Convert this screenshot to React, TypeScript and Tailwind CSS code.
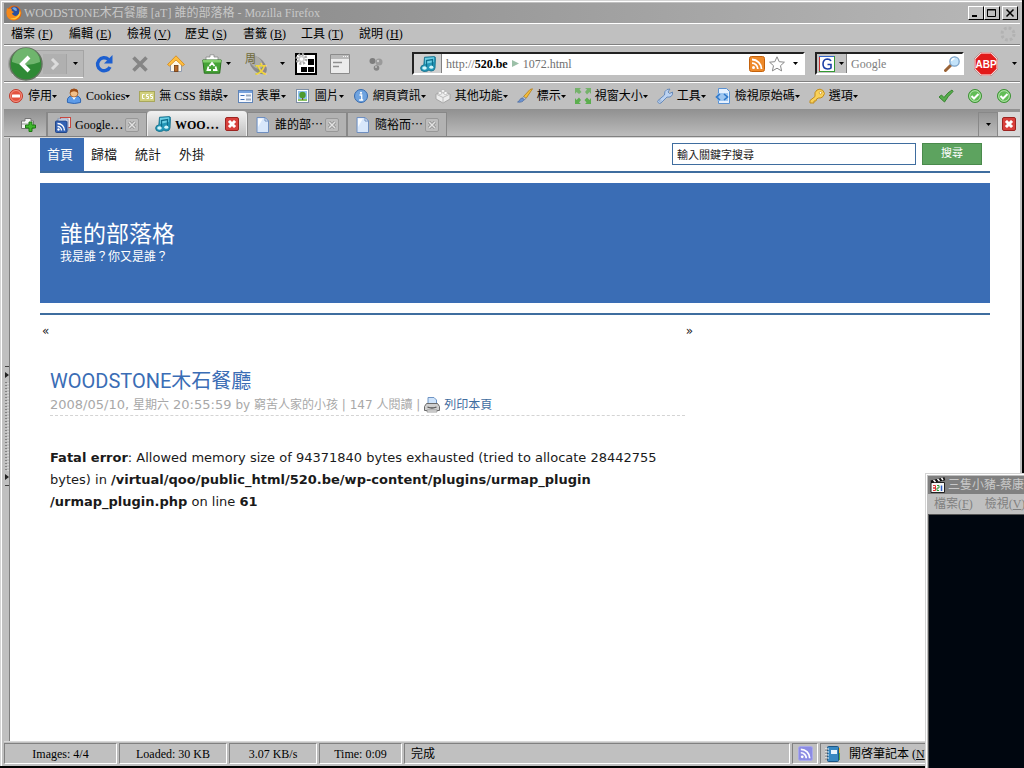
import React, { useState } from "react";

const UI_FONT = "font-['Liberation_Serif','Noto_Sans_CJK_TC',serif]";
const PAGE_FONT = "font-['DejaVu_Sans','Noto_Sans_CJK_TC',sans-serif]";

interface IconProps {
  className?: string;
}

const FirefoxIcon: React.FC<IconProps> = ({ className = "size-4" }) => (
  <svg className={className} viewBox="0 0 16 16">
    <circle cx="8" cy="8" r="7.5" fill="#e66a10" />
    <circle cx="8.6" cy="6.6" r="5" fill="#2a4f9e" />
    <path d="M6 3q3-2 5 1-1 1 0 2-2 0-3-1z" fill="#79a8dd" />
    <path
      d="M1 3q1 1 2 1 2-1 3 0-1 1 0 2l2 1q-1 1-2 1 0 2 3 3 3 0 5-4 0 6-5 8-6 1-8-4-1-4 0-8z"
      fill="#f58a1c"
    />
    <path d="M14 5q2 6-4 9-4 1-6-1 8 2 10-8z" fill="#ffc93a" />
  </svg>
);

const MusicIcon: React.FC<IconProps> = ({ className = "size-4" }) => (
  <svg className={className} viewBox="0 0 16 16">
    <path
      d="M4.500 1.200 14 .6q1.700 0 1.500 1.800L15 12q-.5 3-3.500 3-2 0-2.500-1Q7.500 15.600 4 15.500.5 15 .6 12 1 9 3.800 9z"
      fill="#2497b8"
      stroke="#0f6985"
      strokeWidth=".8"
    />
    <path d="M5 2 14 1.300 13.800 6 5 8z" fill="#6fd0e6" />
    <path d="M6.500 11.500V4.500l6-1V10" fill="none" stroke="#0e6e8c" strokeWidth="1.300" />
    <ellipse cx="4.500" cy="12" rx="2.300" ry="1.800" fill="#d2f5fb" />
    <ellipse cx="11.300" cy="11.200" rx="2" ry="1.600" fill="#d2f5fb" />
  </svg>
);

const RssIcon: React.FC<IconProps & { color?: string; edge?: string }> = ({
  className = "size-4",
  color = "#ee8a2a",
  edge = "#c4620c",
}) => (
  <svg className={className} viewBox="0 0 16 16">
    <rect x=".5" y=".5" width="15" height="15" rx="2" fill={color} stroke={edge} />
    <circle cx="4.500" cy="11.500" r="1.500" fill="#fff" />
    <path
      d="M3 7.200a5.800 5.800 0 0 1 5.800 5.800M3 3.500A9.500 9.500 0 0 1 12.500 13"
      fill="none"
      stroke="#fff"
      strokeWidth="1.800"
    />
  </svg>
);

const FeedsIcon = () => (
  <svg className="size-4" viewBox="0 0 16 16">
    <rect x="5.500" y=".5" width="10" height="10" fill="#f7e3e0" stroke="#c9473e" />
    <rect x="3" y="2" width="10" height="11" fill="#fff" stroke="#7b8fb8" />
    <rect x=".5" y="4" width="11.500" height="11.500" rx="1" fill="#3462b4" stroke="#234788" />
    <circle cx="3.500" cy="12.500" r="1.200" fill="#fff" />
    <path
      d="M2.500 9.500a4 4 0 0 1 4 4M2.500 6.500a7 7 0 0 1 7 7"
      fill="none"
      stroke="#fff"
      strokeWidth="1.400"
    />
  </svg>
);

const DocIcon = () => (
  <svg className="size-4" viewBox="0 0 16 16">
    <path d="M2 .5h8l3.500 3.500v11.500H2z" fill="#d8e7fb" stroke="#6f8fc0" />
    <path d="M3 1.500h5L3 10z" fill="#f8fbff" />
    <path d="M10 .5V4h3.500z" fill="#fff" stroke="#6f8fc0" />
  </svg>
);

const NewTabIcon = () => (
  <svg className="h-4 w-4" viewBox="0 0 16 16">
    <path d="M1.500 12.500V5H5V2.500h6V5h2.500v7.500z" fill="#f4f4f4" stroke="#777" />
    <path d="M2 8h9" stroke="#9a9a9a" />
    <path d="M9 6h3v3h3.500v3H12v3.500H9V12H5.500V9H9z" fill="#3fb62d" stroke="#1d7812" />
  </svg>
);

const StopSignIcon = () => (
  <svg className="size-4" viewBox="0 0 16 16">
    <circle cx="8" cy="8" r="6.500" fill="#e4523f" stroke="#c03a2c" />
    <circle cx="8" cy="8" r="5.500" fill="none" stroke="#f4a596" strokeWidth=".8" />
    <rect x="4" y="6.500" width="8" height="3" rx=".5" fill="#fff" />
  </svg>
);

const PersonIcon = () => (
  <svg className="size-4" viewBox="0 0 16 16">
    <path d="M1.500 14.500q-1-5.500 3.500-6.500h6q4.500 1 3.500 6.500-6 2-13 0z" fill="#5d9be8" stroke="#2f66b3" />
    <path d="M5.500 8 8 12l2.500-4z" fill="#fff" />
    <circle cx="8" cy="5" r="4" fill="#f2c08a" stroke="#a35a22" strokeWidth=".8" />
    <path d="M4 5Q3.500.8 8 .8t4 4.200q-2-1.800-4-1.800T4 5z" fill="#9c4d18" />
  </svg>
);

const CssIcon = () => (
  <svg className="size-4" viewBox="0 0 16 16">
    <rect x=".5" y="3.500" width="15" height="10" fill="#d0cf7c" stroke="#a8a75c" />
    <path
      d="M5.500 6.500h-2v4h2M9.500 6.500h-2v2h2v2h-2M13.500 6.500h-2v2h2v2h-2"
      fill="none"
      stroke="#fff"
    />
  </svg>
);

const FormIcon = () => (
  <svg className="size-4" viewBox="0 0 16 16">
    <rect x="1.500" y="2.500" width="14" height="12" fill="#f4f8ff" stroke="#5f84b8" />
    <path d="M2 3h13v2H2z" fill="#77a2dd" />
    <path d="M3.500 7.500h4M3.500 11.500h4" stroke="#3f6fb5" />
    <path d="M9 7.500h5M9 11.500h5" stroke="#9aa9bf" strokeWidth="2" />
  </svg>
);

const ImageIcon = () => (
  <svg className="size-4" viewBox="0 0 16 16">
    <rect x="1.500" y="1.500" width="12" height="13" fill="#fff" stroke="#7e8fa6" />
    <rect x="3" y="3" width="9" height="10" fill="#8fc2ef" />
    <path d="M3 11h9v2H3z" fill="#8cc466" />
    <circle cx="7.500" cy="7" r="3.200" fill="#4d9a2e" />
    <path d="M7 10h1.200v2H7z" fill="#7a5426" />
  </svg>
);

const InfoIcon = () => (
  <svg className="size-4" viewBox="0 0 16 16">
    <circle cx="8" cy="8" r="6.500" fill="#6fa3df" stroke="#3569ae" />
    <circle cx="8" cy="4.800" r="1.100" fill="#fff" />
    <path d="M6.500 7h2.200v5M6.200 12h4" fill="none" stroke="#fff" strokeWidth="1.300" />
  </svg>
);

const BrickIcon = () => (
  <svg className="size-4" viewBox="0 0 16 16">
    <path d="m1 6 7-3 7 3v5l-7 4-7-4z" fill="#ededed" stroke="#999" strokeWidth=".8" />
    <path d="m1 6 7 3.500L15 6M8 9.500V15" fill="none" stroke="#bbb" />
    <ellipse cx="5" cy="5" rx="2" ry="1.400" fill="#fff" stroke="#aaa" strokeWidth=".7" />
    <ellipse cx="10.500" cy="5" rx="2" ry="1.400" fill="#fff" stroke="#aaa" strokeWidth=".7" />
    <ellipse cx="8" cy="3" rx="2" ry="1.300" fill="#fff" stroke="#aaa" strokeWidth=".7" />
  </svg>
);

const BrushIcon = () => (
  <svg className="size-4" viewBox="0 0 16 16">
    <path d="M15.500.8 13 1.500 6.500 8.500l2.500 2z" fill="#f4bd3c" stroke="#b47c14" strokeWidth=".8" />
    <path d="m6.500 8.500-1 1.500 1.800 1.800L9 10.500z" fill="#b9c7de" stroke="#6c7a92" strokeWidth=".6" />
    <path d="M5.500 10q-2 0-2.700 1.700T.5 14q4.500 1 6.800-2.200z" fill="#6b92d0" stroke="#3a5e9a" strokeWidth=".6" />
  </svg>
);

const ResizeIcon = () => (
  <svg className="size-4" viewBox="0 0 16 16" fill="#5cae4f">
    <path d="M0 0h6L4.500 1.500 6.500 4 4 6 1.500 4 0 6z" opacity=".75" />
    <path d="M16 0v6l-1.500-2L12 6.500 10 4l2-2.500L10 0z" opacity=".75" />
    <path d="M0 16v-6l1.500 2L4 9.500 6 12l-2 2.500L6 16z" />
    <path d="M16 16h-6l1.500-1.500-2-2.500L12 9.500l2.500 2.500L16 10z" />
  </svg>
);

const WrenchIcon = () => (
  <svg className="size-4" viewBox="0 0 16 16">
    <path
      d="M1 12.500 7.500 7Q7 3 10 1.500L13 1l-2 3 1.500 1.500L15.500 4q.5 3-1.500 4.500-2 1-4 .5L4 15q-1.500 1-2.700-.2T1 12.500z"
      fill="#bcd3f2"
      stroke="#5e83b6"
      strokeWidth=".9"
    />
    <circle cx="3.300" cy="13" r=".9" fill="#fff" stroke="#5e83b6" strokeWidth=".6" />
  </svg>
);

const SourceIcon = () => (
  <svg className="size-4" viewBox="0 0 16 16">
    <path d="M3.500.5h8l3 3v12h-11z" fill="#e6f1ff" stroke="#5b92d2" />
    <path d="M2 5h11v8H2z" fill="#8cbcec" opacity=".8" />
    <path d="m5 6-3.500 3L5 12M9 6l3.500 3L9 12" fill="none" stroke="#2f78c9" strokeWidth="1.600" />
  </svg>
);

const KeyIcon = () => (
  <svg className="size-4" viewBox="0 0 16 16">
    <path
      d="M6 8.500Q5 4 8 2t6 .5q3 3 0 6-2 2-4.500 1.500L7.500 11 7 13H5v2H1v-2.500z"
      fill="#f8d15a"
      stroke="#c18c1c"
    />
    <circle cx="11.500" cy="4.800" r="1.300" fill="#fff" stroke="#c18c1c" strokeWidth=".7" />
  </svg>
);

const TickIcon = () => (
  <svg className="size-4" viewBox="0 0 16 16">
    <path d="m1 9 2.500-2L6 9.500Q10 4 14 2l1 1.500Q10 8 6.500 14z" fill="#57ad4d" stroke="#37842f" />
  </svg>
);

const TickCircleIcon = () => (
  <svg className="size-4" viewBox="0 0 16 16">
    <circle cx="8" cy="8" r="6.500" fill="#62bd56" stroke="#3c9133" />
    <circle cx="8" cy="8" r="5.300" fill="none" stroke="#b5e3ae" />
    <path d="m4.500 8 2.500 2.500L11.500 6" fill="none" stroke="#fff" strokeWidth="2" />
  </svg>
);

const ReloadIcon = () => (
  <svg className="h-5 w-[18px]" viewBox="0 0 18 20">
    <path d="M13.500 5.500A6.500 6.500 0 1 0 15 13" fill="none" stroke="#1c5fd0" strokeWidth="3.400" />
    <path d="M17.500 1v8.500H9z" fill="#1c5fd0" />
  </svg>
);

const CancelIcon = () => (
  <svg className="size-4" viewBox="0 0 16 16">
    <path d="m1.500 1.500 13 13m0-13-13 13" stroke="#858585" strokeWidth="3.600" />
  </svg>
);

const HomeIcon = () => (
  <svg className="size-[18px]" viewBox="0 0 18 18">
    <path d="M3.500 8v8.500h11V8L9 3z" fill="#fdf6e6" stroke="#8f9bb0" />
    <rect x="7.500" y="10.500" width="3.500" height="6" fill="#b86a28" stroke="#6e3a10" strokeWidth=".8" />
    <path d="M9 .8.500 9.500l2 1.500L9 5l6.500 6 2-1.500z" fill="#ffbf3f" stroke="#d28518" strokeWidth=".8" />
  </svg>
);

const RecycleIcon = () => (
  <svg className="size-5" viewBox="0 0 20 20">
    <path d="M4 7V3h4V.8h4V3h4v4z" fill="#fff" stroke="#888" strokeWidth=".8" />
    <path d="M.8 6h18.400l-1.500 13.200H2.300z" fill="#45a336" stroke="#2b7120" />
    <path d="M.8 6h18.400l-.3 2.500H1.100z" fill="#83cf6d" />
    <path d="m7.500 12 2.500-3 2.500 3M13.500 12.500l1 3.500H11M6.500 12.500l-1 3.500H9" fill="none" stroke="#fff" strokeWidth="1.800" />
  </svg>
);

const TranslateIcon = () => (
  <svg className="size-6" viewBox="0 0 24 24">
    <ellipse cx="14" cy="13" rx="11" ry="6.500" transform="rotate(48 14 13)" fill="#8a8a8a" />
    <ellipse cx="12" cy="10" rx="8" ry="5" transform="rotate(48 12 10)" fill="#adadaa" />
    <g fontFamily="Noto Sans CJK TC, sans-serif">
      <text x="1" y="11" fontSize="11" fill="#6f6a3a">
        周
      </text>
      <text x="11" y="22" fontSize="12" fontWeight="bold" fill="#f0d43c">
        文
      </text>
    </g>
  </svg>
);

const GridIcon = () => (
  <svg className="size-[22px]" viewBox="0 0 22 22">
    <path d="M0 0h22v22H0z" fill="#000" />
    <path d="M2 2h18v18H2z" fill="#fff" />
    <path d="M13 6h6v6h-6zM6 14h6v5H6zM13 14h6v5h-6z" fill="#000" />
    <circle cx="6.500" cy="6" r="4.500" fill="none" stroke="#aaa" strokeWidth="3" strokeDasharray="2 1.500" />
    <circle cx="6.500" cy="6" r="2.500" fill="none" stroke="#ccc" strokeWidth="1.500" />
  </svg>
);

const PanelIcon = () => (
  <svg className="size-5" viewBox="0 0 20 20">
    <path d="M.5.5h19v19H.5z" fill="#ececec" stroke="#8b8b8b" />
    <path d="M1 1h18v4H1z" fill="#b9b9b9" />
    <path d="M13 2.500h5" stroke="#f5f5f5" strokeDasharray="1 1" />
    <path d="M3 8.500h9M3 12.500h6" stroke="#8f8f8f" strokeWidth="1.500" />
  </svg>
);

const DotsIcon = () => (
  <svg className="size-[14px]" viewBox="0 0 14 14">
    <circle cx="3.500" cy="4" r="3" fill="#7d7d7d" />
    <circle cx="10" cy="5" r="3.500" fill="#9a9a9a" />
    <circle cx="7.500" cy="11" r="2.800" fill="#858585" />
    <circle cx="9" cy="4" r="1.200" fill="#cacaca" />
    <circle cx="7" cy="10" r="1" fill="#c0c0c0" />
  </svg>
);

const StarIcon = () => (
  <svg className="size-4" viewBox="0 0 16 16">
    <path
      d="m8 .8 2.200 4.900 5.200.5-3.900 3.500 1.100 5.200L8 12.200l-4.600 2.700 1.100-5.200L.6 6.200l5.200-.5z"
      fill="#fff"
      stroke="#888"
    />
  </svg>
);

const SearchIcon = () => (
  <svg className="size-4" viewBox="0 0 16 16">
    <path d="m1.500 14.500 5-5" stroke="#9a6235" strokeWidth="3" strokeLinecap="round" />
    <circle cx="10.500" cy="5.500" r="4.700" fill="#c3e3fa" stroke="#7ba3c9" strokeWidth="1.300" />
    <path d="M7.500 5q.5-2.500 3-2.500" fill="none" stroke="#fff" strokeWidth="1.300" />
  </svg>
);

const AdblockIcon = () => (
  <svg className="size-6" viewBox="0 0 24 24">
    <path d="M7 .2h10L23.800 7v10L17 23.800H7L.2 17V7z" fill="#b03030" />
    <path d="M7.200 1h9.600L23 7.200v9.600L16.800 23H7.200L1 16.800V7.200z" fill="#e21a1a" stroke="#fff" />
    <text
      x="12"
      y="15.500"
      textAnchor="middle"
      fontFamily="Liberation Sans, sans-serif"
      fontWeight="bold"
      fontSize="10"
      fill="#fff"
    >
      ABP
    </text>
  </svg>
);

const ThrobberIcon = () => (
  <svg className="size-4" viewBox="0 0 16 16">
    <circle cx="8" cy="8" r="6" fill="none" stroke="#b2b2b2" strokeWidth="3" strokeDasharray="2.700 2" />
  </svg>
);

const PrinterIcon = () => (
  <svg className="size-4" viewBox="0 0 16 16">
    <path d="M4 7V.5h6L12.500 3v4z" fill="#cfe4fb" stroke="#6f94c4" />
    <path d="M2.500 6.500h11l2 3v4H.5v-4z" fill="#cfcfcf" stroke="#6b6b6b" />
    <path d="M3.500 10Q8 12 12.500 10" fill="none" stroke="#555" strokeWidth="1.300" />
    <path d="M3 13h10v2H3z" fill="#f2f2f2" stroke="#888" strokeWidth=".8" />
  </svg>
);

const NotebookIcon = () => (
  <svg className="size-4" viewBox="0 0 16 16">
    <path d="M13 2h2v5h-2z" fill="#e3b53c" />
    <path d="M13 7h2v7h-2z" fill="#58a648" />
    <rect x="2.500" y=".5" width="11" height="15" rx="1" fill="#3989c2" stroke="#1e5785" />
    <path d="M6 4h6v4H6z" fill="#e9f4fc" />
    <path d="M0 3h4M0 6h4M0 9h4M0 12h4" stroke="#f7f7f7" />
    <path d="M0 4h3M0 7h3M0 10h3M0 13h3" stroke="#555" strokeWidth=".6" />
  </svg>
);

const ClapperIcon = () => (
  <svg className="size-4 shrink-0" viewBox="0 0 16 16">
    <path d="M1 5.500h13.500v10H1z" fill="#f7f7f7" stroke="#222" />
    <path d="m.5 3.500 14-3.200.7 3-14 3z" fill="#111" />
    <path d="m3.500 3 2 2M7.500 2l2 2M11.500 1l1.500 2" stroke="#fff" strokeWidth="1.500" />
    <path d="M3 8.500h2.500V11H3h2.500v2.500H3" fill="none" stroke="#d33" />
    <path d="M7 8.500h2V11H7v2.500h2" fill="none" stroke="#2a9a38" />
    <path d="M11.500 8.500v5.500" stroke="#2f5fc4" strokeWidth="1.500" />
  </svg>
);

const Caret: React.FC<IconProps> = ({ className = "" }) => (
  <svg className={`h-[3px] w-[5px] shrink-0 ${className}`} viewBox="0 0 5 3">
    <path d="M0 0h5L2.500 3z" fill="#000" />
  </svg>
);

const CloseIcon: React.FC<{ active?: boolean }> = ({ active = false }) => (
  <svg className="size-[14px]" viewBox="0 0 14 14">
    <rect
      x=".5"
      y=".5"
      width="13"
      height="13"
      rx="1.500"
      fill={active ? "#d8403c" : "#bdbdbd"}
      stroke={active ? "#9c2421" : "#989898"}
    />
    <path d="m4 4 6 6m0-6-6 6" stroke={active ? "#fff" : "#888"} strokeWidth="3" />
    <path d="m4 4 6 6m0-6-6 6" stroke={active ? "#fff" : "#e2e2e2"} strokeWidth="1.600" />
  </svg>
);

const menus = [
  { label: "檔案", accessKey: "F" },
  { label: "編輯", accessKey: "E" },
  { label: "檢視", accessKey: "V" },
  { label: "歷史", accessKey: "S" },
  { label: "書籤", accessKey: "B" },
  { label: "工具", accessKey: "T" },
  { label: "說明", accessKey: "H" },
];

const devTools = [
  { label: "停用", icon: <StopSignIcon /> },
  { label: "Cookies", icon: <PersonIcon /> },
  { label: "無 CSS 錯誤", icon: <CssIcon /> },
  { label: "表單", icon: <FormIcon /> },
  { label: "圖片", icon: <ImageIcon /> },
  { label: "網頁資訊", icon: <InfoIcon /> },
  { label: "其他功能", icon: <BrickIcon /> },
  { label: "標示", icon: <BrushIcon /> },
  { label: "視窗大小", icon: <ResizeIcon /> },
  { label: "工具", icon: <WrenchIcon /> },
  { label: "檢視原始碼", icon: <SourceIcon /> },
  { label: "選項", icon: <KeyIcon /> },
];

const tabs = [
  { label: "Google", icon: <FeedsIcon /> },
  { label: "WOO", icon: <MusicIcon /> },
  { label: "誰的部", icon: <DocIcon /> },
  { label: "隨裕而", icon: <DocIcon /> },
];

const navLinks = ["首頁", "歸檔", "統計", "外掛"];

const WindowButton: React.FC<{ label: string; children: React.ReactNode }> = ({
  label,
  children,
}) => (
  <button
    type="button"
    aria-label={label}
    className="flex h-[14px] w-4 items-center justify-center border border-t-white border-r-black border-b-black border-l-white bg-[#c0c0c0]"
  >
    <svg className="h-[10px] w-3" viewBox="0 0 12 10" fill="none" stroke="#000">
      {children}
    </svg>
  </button>
);

const TitleBar = () => (
  <div className="flex h-5 items-center bg-linear-to-r from-[#808080] to-[#b8b8b8] px-0.5">
    <FirefoxIcon />
    <h1 className="ml-0.5 flex-1 truncate text-xs text-[#c8c8c8]">
      WOODSTONE木石餐廳 [aT] 誰的部落格 - Mozilla Firefox
    </h1>
    <WindowButton label="最小化">
      <path d="M2 8h5" strokeWidth="2" />
    </WindowButton>
    <WindowButton label="最大化">
      <path d="M1.500 1.500h8v7h-8zM1 2h9" />
    </WindowButton>
    <div className="ml-0.5">
      <WindowButton label="關閉">
        <path d="m2.500 1.500 7 7m0-7-7 7" strokeWidth="1.500" />
      </WindowButton>
    </div>
  </div>
);

const MenuBar = () => (
  <nav className="flex h-[22px] items-center border-y border-t-white border-b-[#808080] pr-1">
    {menus.map((menu) => (
      <button
        key={menu.accessKey}
        type="button"
        className="w-[58px] pl-[7px] text-left text-xs whitespace-nowrap"
      >
        {menu.label} (<u>{menu.accessKey}</u>)
      </button>
    ))}
    <div className="ml-auto">
      <ThrobberIcon />
    </div>
  </nav>
);

const ToolButton: React.FC<{ label: string; className: string; children: React.ReactNode }> = ({
  label,
  className,
  children,
}) => (
  <button
    type="button"
    aria-label={label}
    className={`flex shrink-0 items-center justify-center ${className}`}
  >
    {children}
  </button>
);

const NavToolbar: React.FC = () => {
  const [query, setQuery] = useState("");

  return (
    <div className="flex h-[37px] items-center border-y border-t-white border-b-[#808080] pl-1">
      {/* Back / forward */}
      <div className="flex h-7 w-[76px] shrink-0 items-center rounded-l-full rounded-r-xl border border-[#a4a4a4] border-b-white bg-[#b8b8b8]">
        <button type="button" aria-label="上一頁" className="-my-1 shrink-0">
          <svg className="size-[34px]" viewBox="0 0 34 34">
            <circle cx="17" cy="17" r="16" fill="#2f8a35" stroke="#63735f" strokeWidth="1.500" />
            <path d="M3 15a14 14 0 0 1 28 0q-14 6-28 0z" fill="#6fb56d" />
            <path d="m20 10-7 7 7 7" fill="none" stroke="#fff" strokeWidth="4" />
          </svg>
        </button>
        <ToolButton label="下一頁" className="h-5 w-6 border-r border-[#a4a4a4] bg-[#b0b0b0]">
          <svg className="size-3" viewBox="0 0 12 12">
            <path d="m3 1 5 5-5 5" fill="none" stroke="#dcdcdc" strokeWidth="3" />
          </svg>
        </ToolButton>
        <ToolButton label="最近瀏覽" className="h-5 w-4">
          <Caret />
        </ToolButton>
      </div>

      <ToolButton label="重新載入" className="w-10">
        <ReloadIcon />
      </ToolButton>
      <ToolButton label="停止" className="w-8">
        <CancelIcon />
      </ToolButton>
      <ToolButton label="首頁" className="w-10">
        <HomeIcon />
      </ToolButton>
      <ToolButton label="復原關閉分頁" className="w-10 gap-1">
        <RecycleIcon />
        <Caret />
      </ToolButton>
      <ToolButton label="翻譯" className="w-10">
        <TranslateIcon />
      </ToolButton>
      <ToolButton label="翻譯選項" className="w-3">
        <Caret />
      </ToolButton>
      <ToolButton label="方格" className="w-9">
        <GridIcon />
      </ToolButton>
      <ToolButton label="側邊面板" className="w-8">
        <PanelIcon />
      </ToolButton>
      <ToolButton label="附加元件" className="w-10">
        <DotsIcon />
      </ToolButton>

      {/* Address bar */}
      <div className="ml-4 flex h-[23px] flex-1 items-center border-2 border-t-[#222] border-r-white border-b-white border-l-[#222] bg-white text-xs">
        <div className="flex h-full w-7 items-center justify-center border-r border-[#808080] bg-[#d0d0d0]">
          <MusicIcon />
        </div>
        <div className="flex flex-1 items-center pl-1 text-[#707070]">
          <span>http://</span>
          <a href="#site" className="font-bold text-black">
            520.be
          </a>
          <svg className="mx-1 size-[7px]" viewBox="0 0 7 7">
            <path d="M0 0v7l7-3.500z" fill="#9cc0a8" />
          </svg>
          <a href="#post">1072.html</a>
        </div>
        <ToolButton label="訂閱" className="w-5">
          <RssIcon />
        </ToolButton>
        <ToolButton label="加入書籤" className="w-5">
          <StarIcon />
        </ToolButton>
        <ToolButton label="網址清單" className="w-4">
          <Caret />
        </ToolButton>
      </div>

      {/* Search box */}
      <div className="ml-[10px] flex h-[23px] w-[149px] shrink-0 items-center border-2 border-t-[#222] border-r-white border-b-white border-l-[#222] bg-white text-xs">
        <ToolButton label="搜尋引擎" className="h-full w-[30px] gap-1 border-r border-[#808080] bg-[#c4c4c4]">
          <svg className="size-4" viewBox="0 0 16 16">
            <path d="M0 0h16v16H0z" fill="#fff" />
            <path d="M.5 0v16" stroke="#c33" />
            <path d="M0 .5h16" stroke="#36c" />
            <path d="M15.500 0v16" stroke="#393" />
            <path d="M0 15.500h16" stroke="#393" />
            <path
              d="M12 5Q11 3 8.300 3 4 3.300 4 8t4.500 5Q11 13 12 12V8.500H8.500"
              fill="none"
              stroke="#1b3fa6"
              strokeWidth="1.600"
            />
          </svg>
          <Caret />
        </ToolButton>
        <input
          aria-label="Google"
          placeholder="Google"
          value={query}
          onChange={(e) => setQuery(e.target.value)}
          className="w-0 flex-1 pl-1 outline-none placeholder:text-[#808080]"
        />
        <ToolButton label="開始搜尋" className="w-5">
          <SearchIcon />
        </ToolButton>
      </div>
      <ToolButton label="Adblock Plus" className="w-11">
        <AdblockIcon />
      </ToolButton>
      <ToolButton label="Adblock 選項" className="w-3">
        <Caret />
      </ToolButton>
    </div>
  );
};

const DevToolbar = () => (
  <div className="flex h-[27px] items-center border-t border-white px-1 text-xs">
    {devTools.map((tool) => (
      <button
        key={tool.label}
        type="button"
        className="mr-[9px] flex shrink-0 items-center whitespace-nowrap"
      >
        {tool.icon}
        <span className="ml-1">{tool.label}</span>
        <Caret />
      </button>
    ))}
    <div className="ml-auto flex gap-[13px] pr-1">
      <TickIcon />
      <TickCircleIcon />
      <TickCircleIcon />
    </div>
  </div>
);

const TabStrip: React.FC = () => {
  const [active, setActive] = useState(1);

  return (
    <div className="flex h-7 items-end border-b border-[#808080] bg-linear-to-b from-[#909090] to-[#bcbcbc] pl-[5px]">
      <ToolButton label="開新分頁" className="h-6 w-[38px] border-r border-[#888]">
        <NewTabIcon />
      </ToolButton>
      {tabs.map((tab, i) => (
        <div
          key={tab.label}
          className={
            i === active
              ? "flex h-[25px] w-[100px] items-center rounded-t border border-b-0 border-[#eee] bg-linear-to-b from-[#f0f0f0] to-[#c0c0c0] px-[7px]"
              : "flex h-6 w-[100px] items-center border border-b-0 border-[#888] bg-[#b2b2b2] px-[7px]"
          }
        >
          <button
            type="button"
            onClick={() => setActive(i)}
            className={`flex flex-1 items-center gap-1 text-xs whitespace-nowrap ${
              i === active ? "font-bold" : ""
            }`}
          >
            {tab.icon}
            <span>
              {tab.label}
              <span className="font-['Noto_Sans_CJK_TC',sans-serif]">⋯</span>
            </span>
          </button>
          <button type="button" aria-label="關閉分頁">
            <CloseIcon active={i === active} />
          </button>
        </div>
      ))}
      <ToolButton label="分頁清單" className="ml-auto h-6 w-5 border border-b-0 border-[#888]">
        <Caret />
      </ToolButton>
      <ToolButton label="關閉目前分頁" className="h-6 w-[22px] bg-[#d8d8d8]">
        <CloseIcon active />
      </ToolButton>
    </div>
  );
};

const SidebarSplitter = () => (
  <div className="flex w-1.5 shrink-0 items-start justify-end border-r border-[#808080] pt-[228px]">
    <svg className="h-[120px] w-1" viewBox="0 0 4 120">
      <path d="M0 .5h4M0 119.500h4" stroke="#444" />
      <path d="M0 6v6l4-3zM0 108v6l4-3z" fill="#222" />
      <path d="M1 16v88" stroke="#444" strokeDasharray="1 2" />
      <path d="M3 17v88" stroke="#eee" strokeDasharray="1 2" />
    </svg>
  </div>
);

const BlogPage: React.FC = () => {
  const [keyword, setKeyword] = useState("輸入關鍵字搜尋");

  return (
    <main className={`min-w-0 flex-1 overflow-hidden bg-white px-[30px] text-[#1a1a1a] ${PAGE_FONT}`}>
      <header>
        <div className="flex h-[35px] justify-between border-b-2 border-[#3f6d9f]">
          <nav className="flex">
            {navLinks.map((link, i) => (
              <a
                key={link}
                href="#nav"
                className={`flex w-11 items-center pl-[7px] text-[13px] ${
                  i === 0 ? "bg-[#3a6db5] text-white" : ""
                }`}
              >
                {link}
              </a>
            ))}
          </nav>
          <form
            className="mr-2 flex items-start gap-1.5 pt-[5px] text-[11px]"
            onSubmit={(e) => e.preventDefault()}
          >
            <input
              aria-label="搜尋關鍵字"
              value={keyword}
              onChange={(e) => setKeyword(e.target.value)}
              className="h-[22px] w-[244px] border border-[#3f6d9f] px-1 outline-none"
            />
            <button
              type="submit"
              className="flex h-[22px] w-[60px] items-center justify-center border border-[#4a8a4c] bg-[#5da35f] text-white"
            >
              搜尋
            </button>
          </form>
        </div>

        <div className="mt-[10px] h-[120px] bg-[#3a6db5] px-5 pt-9 text-white">
          <h2 className="text-[23px] leading-[30px]">誰的部落格</h2>
          <p className="text-xs">我是誰？你又是誰？</p>
        </div>
        <div className="mt-[10px] border-b-2 border-[#3f6d9f]" />
      </header>

      <div className="max-w-[655px] px-0.5 pt-2">
        <div className="flex justify-between text-xs">
          <a href="#prev">«</a>
          <a href="#next">»</a>
        </div>
      </div>

      <article className="max-w-[645px] pt-7 pl-[10px]">
        <h3 className="font-['Roboto','Noto_Sans_CJK_TC',sans-serif] text-xl leading-7 text-[#3a6db5]">
          WOODSTONE木石餐廳
        </h3>
        <div className="flex h-[21px] items-center gap-1 border-b border-dashed border-[#d4d4d4] text-xs whitespace-nowrap text-[#a8a8a8]">
          <time className="flex items-center gap-1">
            <span className="text-[13px]">2008/05/10,</span>
            星期六
            <span className="text-[13px]">20:55:59</span>
          </time>
          <span>by 窮苦人家的小孩 | 147 人閱讀 |</span>
          <a href="#print" className="flex items-center gap-1 text-[#3f6d9f]">
            <PrinterIcon />
            列印本頁
          </a>
        </div>
        <p className="mt-[31px] text-[13px] leading-[22px]">
          <b>Fatal error</b>: Allowed memory size of 94371840 bytes exhausted (tried to allocate
          28442755 bytes) in <b>/virtual/qoo/public_html/520.be/wp-content/plugins/urmap_plugin</b>
          <wbr />
          <b>/urmap_plugin.php</b> on line <b>61</b>
        </p>
      </article>
    </main>
  );
};

const StatusCell: React.FC<{ className: string; children?: React.ReactNode }> = ({
  className,
  children,
}) => (
  <div
    className={`flex h-[21px] items-center overflow-hidden border border-t-[#808080] border-r-white border-b-white border-l-[#808080] whitespace-nowrap ${className}`}
  >
    {children}
  </div>
);

const StatusBar = () => (
  <footer className="flex gap-0.5 border-t border-[#d8d8d8] py-px text-xs">
    <StatusCell className="w-[113px] justify-center">Images: 4/4</StatusCell>
    <StatusCell className="w-[108px] justify-center">Loaded: 30 KB</StatusCell>
    <StatusCell className="w-[88px] justify-center">3.07 KB/s</StatusCell>
    <StatusCell className="w-[83px] justify-center">Time: 0:09</StatusCell>
    <StatusCell className="flex-1 pl-1.5">完成</StatusCell>
    <StatusCell className="w-[26px] justify-center">
      <RssIcon color="#8c8ce4" edge="#a9a9ee" className="size-[15px]" />
    </StatusCell>
    <StatusCell className="w-[200px] gap-2 pl-1">
      <NotebookIcon />
      <span>
        開啓筆記本 (<u>N</u>)
      </span>
    </StatusCell>
  </footer>
);

// Media player window that sits in front of the browser, cut off by the screen edge
const PlayerWindow = () => (
  <aside className="absolute right-0 bottom-0 flex h-[295px] w-[99px] flex-col overflow-hidden border-t border-l border-[#d4d4d4] bg-[#c0c0c0] pt-0.5 pl-0.5 text-xs whitespace-nowrap shadow-[inset_1px_1px_0_#fff]">
    <div className="flex h-[18px] items-center gap-0.5 bg-[#808080] pl-0.5 text-[#c8c8c8]">
      <ClapperIcon />
      三隻小豬-蔡康
    </div>
    <div className="flex h-[20px] items-center gap-3 pl-1.5 text-[#808080]">
      <span>
        檔案(<u>F</u>)
      </span>
      <span>
        檢視(<u>V</u>)
      </span>
    </div>
    <div className="flex-1 border-t border-l border-[#555] bg-[#00060f]" />
  </aside>
);

export default function App() {
  return (
    <div className={`relative h-screen overflow-hidden bg-black pr-0.5 pb-0.5 text-black ${UI_FONT}`}>
      <div className="flex h-full flex-col border-t border-l border-[#d4d4d4] bg-[#c0c0c0] pt-0.5 pr-0.5 pb-px pl-[3px] shadow-[inset_1px_1px_0_#fff]">
        <TitleBar />
        <MenuBar />
        <NavToolbar />
        <DevToolbar />
        <TabStrip />
        <div className="flex min-h-0 flex-1 border-t border-[#d8d8d8]">
          <SidebarSplitter />
          <BlogPage />
        </div>
        <StatusBar />
      </div>
      <PlayerWindow />
    </div>
  );
}
